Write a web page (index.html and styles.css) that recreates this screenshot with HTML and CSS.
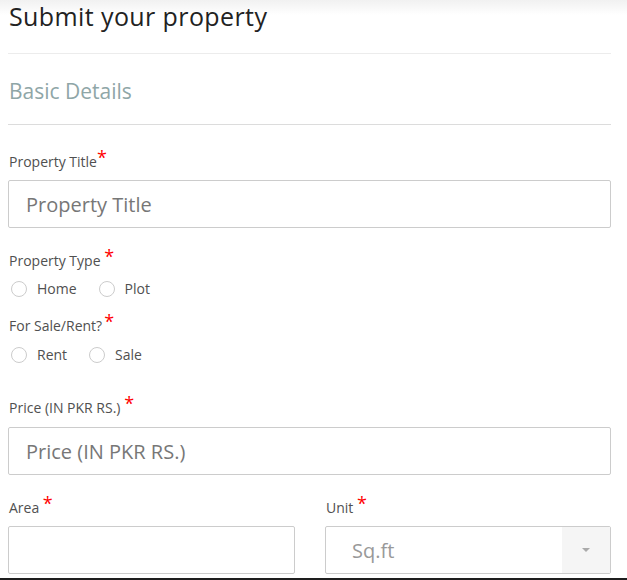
FILE: index.html
```html
<!DOCTYPE html>
<html>
<head>
<meta charset="utf-8">
<link rel="stylesheet" href="styles.css">
</head>
<body>
<div class="page">
  <h1 class="title">Submit your property</h1>
  <hr class="rule">
  <h2 class="section">Basic Details</h2>
  <hr class="rule rule-dark">

  <div class="field field-first">
    <label class="label">Property Title<span class="req">*</span></label>
    <input class="input" type="text" placeholder="Property Title">
  </div>

  <div class="field field-radio">
    <label class="label">Property Type <span class="req">*</span></label>
    <div class="radios">
      <label class="radio"><span class="dot"></span>Home</label>
      <label class="radio"><span class="dot"></span>Plot</label>
    </div>
  </div>

  <div class="field field-radio">
    <label class="label">For Sale/Rent?<span class="req req-gap">*</span></label>
    <div class="radios">
      <label class="radio"><span class="dot"></span>Rent</label>
      <label class="radio"><span class="dot"></span>Sale</label>
    </div>
  </div>

  <div class="field field-price">
    <label class="label">Price (IN PKR RS.) <span class="req">*</span></label>
    <input class="input" type="text" placeholder="Price (IN PKR RS.)">
  </div>

  <div class="row">
    <div class="field">
      <label class="label">Area <span class="req">*</span></label>
      <input class="input" type="text">
    </div>
    <div class="field">
      <label class="label">Unit <span class="req">*</span></label>
      <div class="select">
        <span class="select-value">Sq.ft</span>
        <span class="select-arrow"><span class="caret"></span></span>
      </div>
    </div>
  </div>
</div>
<div class="bottom-bar"></div>
</body>
</html>
```

FILE: styles.css
```css
html, body {
  height: 100%;
}
body {
  margin: 0 0 0 8px;
  font-family: "Open Sans", "Liberation Sans", sans-serif;
  color: #555;
  background: #fff linear-gradient(#f1f1f1, #fff 15px) no-repeat;
  overflow: hidden;
}
.page {
  width: 603px;
}
.title {
  margin: 0;
  font-size: 25px;
  letter-spacing: 0.4px;
  font-weight: 400;
  line-height: 32px;
  color: #222;
  padding-left: 1px;
}
.rule {
  border: 0;
  height: 1px;
  background: #ececec;
  margin: 21px 0 0;
}
.rule-dark {
  background: #dcdcdc;
  margin-top: 0;
}
.section {
  margin: 0;
  padding: 26px 0 22px 1px;
  font-size: 21px;
  font-weight: 400;
  line-height: 22px;
  color: #8fa6a7;
}
.field {
  display: flex;
  flex-direction: column;
}
.label {
  display: block;
  font-size: 14px;
  line-height: 16px;
  color: #505050;
  padding-left: 1px;
  margin-top: 28px;
}
.field-first .label {
  margin-top: 29px;
}
.req {
  color: #f00;
  font-size: 18px;
  position: relative;
  top: -3px;
  line-height: 0;
}
.req-gap {
  margin-left: 2px;
}
.input {
  box-sizing: border-box;
  height: 48px;
  margin-top: 10px;
  border: 1px solid #ccc;
  border-radius: 2px;
  padding: 0 17px;
  font-family: inherit;
  font-size: 20px;
  color: #555;
  background: #fff;
  outline: none;
}
.input::placeholder {
  color: #777;
}
.field-radio .label {
  margin-top: 25px;
}
.field-radio + .field-radio .label {
  margin-top: 19px;
}
.radios {
  display: flex;
  gap: 22px;
  margin-top: 10px;
  padding-left: 3px;
}
.field-radio + .field-radio .radios {
  margin-top: 11px;
}
.radio {
  display: flex;
  align-items: center;
  gap: 10px;
  font-size: 14px;
  line-height: 20px;
  color: #505050;
}
.dot {
  width: 14px;
  height: 14px;
  border: 1px solid #ccc;
  border-radius: 50%;
  background: #fff;
}
.field-price .label {
  margin-top: 35px;
}
.field-price .input {
  margin-top: 11px;
}
.row {
  display: grid;
  grid-template-columns: 287px 286px;
  column-gap: 30px;
}
.row .label {
  margin-top: 25px;
}
.select {
  box-sizing: border-box;
  height: 48px;
  margin-top: 10px;
  border: 1px solid #ccc;
  border-radius: 2px;
  display: flex;
  align-items: stretch;
  background: #fff;
}
.select-value {
  flex: 1;
  display: flex;
  align-items: center;
  padding-left: 26px;
  font-size: 20px;
  color: #999;
}
.select-arrow {
  width: 48px;
  background: #f5f5f5;
  display: flex;
  align-items: center;
  justify-content: center;
}
.caret {
  width: 0;
  height: 0;
  border-left: 4px solid transparent;
  border-right: 4px solid transparent;
  border-top: 4px solid #aaa;
}
.bottom-bar {
  position: fixed;
  left: 0;
  right: 0;
  bottom: 0;
  height: 2px;
  background: #1e1e1e;
}
```
